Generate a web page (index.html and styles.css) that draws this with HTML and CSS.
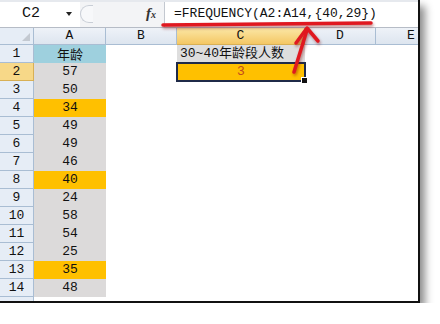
FILE: index.html
```html
<!DOCTYPE html>
<html>
<head>
    <title>FREQUENCY - Excel</title>
    <link rel="stylesheet" href="styles.css">
</head>
<body>
<div class="shot">
    <div class="fbar">
        <div class="namebox">C2<span class="drop"></span></div>
        <div class="grip"></div>
        <div class="fx"><i>f</i><span>x</span></div>
        <div class="formula">=FREQUENCY(A2:A14,{40,29})</div>
    </div>
    <div class="sheet">
        <div class="corner"></div>
        <div class="ch">A</div>
        <div class="ch">B</div>
        <div class="ch sel">C</div>
        <div class="ch">D</div>
        <div class="ch">E</div>

        <div class="rh">1</div>
        <div class="c a head">年龄</div><div class="c"></div><div class="c title">30~40年龄段人数</div><div class="c"></div><div class="c"></div>
        <div class="rh sel">2</div>
        <div class="c a">57</div><div class="c"></div><div class="c result">3</div><div class="c"></div><div class="c"></div>
        <div class="rh">3</div>
        <div class="c a">50</div><div class="c"></div><div class="c"></div><div class="c"></div><div class="c"></div>
        <div class="rh">4</div>
        <div class="c a hit">34</div><div class="c"></div><div class="c"></div><div class="c"></div><div class="c"></div>
        <div class="rh">5</div>
        <div class="c a">49</div><div class="c"></div><div class="c"></div><div class="c"></div><div class="c"></div>
        <div class="rh">6</div>
        <div class="c a">49</div><div class="c"></div><div class="c"></div><div class="c"></div><div class="c"></div>
        <div class="rh">7</div>
        <div class="c a">46</div><div class="c"></div><div class="c"></div><div class="c"></div><div class="c"></div>
        <div class="rh">8</div>
        <div class="c a hit">40</div><div class="c"></div><div class="c"></div><div class="c"></div><div class="c"></div>
        <div class="rh">9</div>
        <div class="c a">24</div><div class="c"></div><div class="c"></div><div class="c"></div><div class="c"></div>
        <div class="rh">10</div>
        <div class="c a">58</div><div class="c"></div><div class="c"></div><div class="c"></div><div class="c"></div>
        <div class="rh">11</div>
        <div class="c a">54</div><div class="c"></div><div class="c"></div><div class="c"></div><div class="c"></div>
        <div class="rh">12</div>
        <div class="c a">25</div><div class="c"></div><div class="c"></div><div class="c"></div><div class="c"></div>
        <div class="rh">13</div>
        <div class="c a hit">35</div><div class="c"></div><div class="c"></div><div class="c"></div><div class="c"></div>
        <div class="rh">14</div>
        <div class="c a">48</div><div class="c"></div><div class="c"></div><div class="c"></div><div class="c"></div>
        <div class="rh"></div>
        <div class="c"></div><div class="c"></div><div class="c"></div><div class="c"></div><div class="c"></div>
    </div>
    <!-- red marks drawn over the screenshot -->
    <svg class="marks" width="420" height="303" viewBox="0 0 420 303">
        <path d="M163 25 L371 23" />
        <path d="M294 72 L307 30" />
        <path d="M296 43 L307 28 L318 41" />
    </svg>
</div>
</body>
</html>
```

FILE: styles.css
```css
body {
    margin: 0;
    background: #fff;
    font-family: "Liberation Mono", "Noto Sans CJK SC", monospace;
}
.shot {
    position: relative;
    width: 420px;
    height: 303px;
    box-sizing: border-box;
    border-right: 2px solid #111;
    border-bottom: 2px solid #111;
    overflow: hidden;
    background: #fff;
    box-shadow: 5px 6px 8px rgba(0, 0, 0, 0.45);
}
.fbar {
    display: flex;
    height: 28px;
    box-sizing: border-box;
    border-top: 2px solid #e6e9ee;
    border-bottom: 1px solid #b6bcc6;
    background: #f3f4f6;
}
.namebox {
    width: 80px;
    box-sizing: border-box;
    padding-left: 22px;
    background: #fff;
    font-size: 15px;
    line-height: 24px;
    color: #111;
    position: relative;
}
.drop {
    position: absolute;
    left: 66px;
    top: 10px;
    border-left: 3px solid transparent;
    border-right: 3px solid transparent;
    border-top: 4px solid #222;
}
.grip {
    width: 12px;
    height: 16px;
    margin-top: 3px;
    border: 1px solid #c9ced6;
    border-right: none;
    border-radius: 9px 0 0 9px;
    background: #f7f8fa;
}
.fx {
    width: 63px;
    text-align: right;
    padding-right: 8px;
    font-family: "Liberation Serif", serif;
    font-weight: bold;
    font-size: 15px;
    line-height: 23px;
    color: #333;
}
.fx span {
    font-size: 10px;
    font-style: italic;
}
.formula {
    flex: 1;
    border-left: 1px solid #c3c8d0;
    background: #fff;
    padding-left: 9px;
    font-size: 13px;
    line-height: 24px;
    color: #111;
}
.sheet {
    display: grid;
    grid-template-columns: 34px 72px 71px 128px 71px 71px;
    grid-template-rows: 17px repeat(15, 18px);
    width: 447px;
    font-size: 13px;
    color: #111;
}
.corner, .ch, .rh {
    box-sizing: border-box;
    background: #e6edf6;
    border-right: 1px solid #a9bdd3;
    border-bottom: 1px solid #a9bdd3;
    text-align: center;
}
.corner {
    position: relative;
}
.corner::after {
    content: "";
    position: absolute;
    right: 3px;
    bottom: 3px;
    border-left: 8px solid transparent;
    border-bottom: 8px solid #c3c9d1;
}
.ch {
    line-height: 16px;
    background: linear-gradient(#eef2f8, #dde5ef);
}
.ch.sel {
    background: linear-gradient(#fbe7a6, #f4c764);
    border-color: #d8b055;
}
.rh {
    line-height: 17px;
}
.rh.sel {
    background: #f7d888;
    border-color: #d8b055;
}
.c {
    line-height: 18px;
    text-align: center;
}
.c.a {
    background: #dcdada;
}
.c.head {
    background: #9ed0de;
    font-family: "Noto Sans CJK SC", sans-serif;
    font-size: 13px;
}
.c.hit {
    background: #ffc000;
}
.c.title {
    background: #dedede;
    text-align: left;
    padding-left: 3px;
    white-space: nowrap;
    font-family: "Liberation Mono", "Noto Sans CJK SC", monospace;
}
.c.result {
    position: relative;
    background: #ffc000;
    color: #c24a1c;
    box-sizing: border-box;
    border: 2px solid #1f2a48;
    margin: -1px -1px -1px -1px;
    line-height: 16px;
}
.c.result::after {
    content: "";
    position: absolute;
    right: -4px;
    bottom: -4px;
    width: 5px;
    height: 5px;
    background: #111;
    border: 1px solid #fff;
}
.marks {
    position: absolute;
    left: 0;
    top: 0;
    fill: none;
    stroke: #e01820;
    stroke-width: 3.5;
    stroke-linecap: round;
    stroke-linejoin: round;
    filter: drop-shadow(1px 2px 1.5px rgba(120, 0, 0, 0.45));
}
```
